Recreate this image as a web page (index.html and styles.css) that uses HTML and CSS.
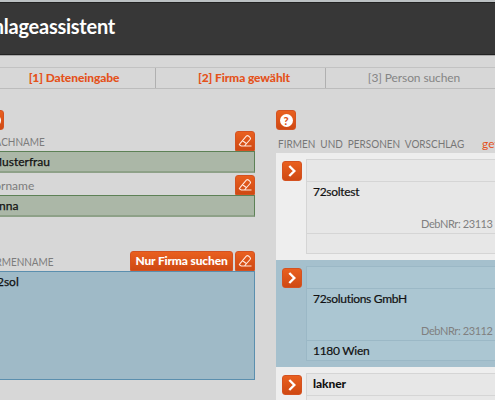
FILE: index.html
```html
<!DOCTYPE html>
<html lang="de">

<head>
    <meta charset="UTF-8">
    <meta name="viewport" content="width=device-width, initial-scale=1.0">
    <title>Anlageassistent</title>
    <link rel="stylesheet" href="styles.css">
</head>

<body>
    <svg class="defs" width="0" height="0">
        <symbol id="eraser" viewBox="0 0 20 20">
            <path d="M5 12.6 11.3 5.2Q12.3 4 13.5 5L15 6.3Q16.1 7.4 15.1 8.5L9.4 15H6.2L4.5 13.8Q4 13.2 5 12.6ZM7.6 9.7 11.6 12.8M6.2 15H16.5" />
        </symbol>
        <symbol id="arrow" viewBox="0 0 20 20">
            <path d="M7.3 5 12.3 10 7.3 15" />
        </symbol>
    </svg>

    <header class="header">
        <h1>Anlageassistent</h1>
    </header>

    <nav class="steps">
        <div class="step done">[1] Dateneingabe</div>
        <div class="step done">[2] Firma gewählt</div>
        <div class="step">[3] Person suchen</div>
    </nav>

    <main class="main">
        <section class="form">
            <div class="help"><span>?</span></div>
            <div class="label-row first">
                <label class="caps">NACHNAME</label>
                <button class="btn tab"><svg class="eraser"><use href="#eraser" /></svg></button>
            </div>
            <div class="field green">Musterfrau</div>
            <div class="label-row">
                <label>Vorname</label>
                <button class="btn tab"><svg class="eraser"><use href="#eraser" /></svg></button>
            </div>
            <div class="field green">Anna</div>
            <div class="label-row company">
                <label class="caps">FIRMENNAME</label>
                <button class="btn tab search">Nur Firma suchen</button>
                <button class="btn tab"><svg class="eraser"><use href="#eraser" /></svg></button>
            </div>
            <div class="field blue">72sol</div>
        </section>

        <section class="results">
            <div class="help"><span>?</span></div>
            <div class="results-title">
                <span class="caps">FIRMEN UND PERSONEN VORSCHLAG</span>
                <span class="found">gefunden</span>
            </div>
            <div class="item">
                <button class="btn go"><svg class="arrow"><use href="#arrow" /></svg></button>
                <div class="card">
                    <div class="top"></div>
                    <div class="middle">
                        <span class="name">72soltest</span>
                        <span class="number">DebNRr: 23113</span>
                    </div>
                    <div class="bottom"></div>
                </div>
            </div>
            <div class="item selected">
                <button class="btn go"><svg class="arrow"><use href="#arrow" /></svg></button>
                <div class="card">
                    <div class="top"></div>
                    <div class="middle">
                        <span class="name">72solutions GmbH</span>
                        <span class="number">DebNRr: 23112</span>
                    </div>
                    <div class="bottom">1180 Wien</div>
                </div>
            </div>
            <div class="item">
                <button class="btn go"><svg class="arrow"><use href="#arrow" /></svg></button>
                <div class="card">
                    <div class="top"><b>lakner</b></div>
                    <div class="middle"></div>
                    <div class="bottom"></div>
                </div>
            </div>
        </section>
    </main>
</body>

</html>
```

FILE: styles.css
```css
* {
    box-sizing: border-box;
}

body {
    margin: 0;
    width: 495px;
    height: 400px;
    overflow: hidden;
    background-color: #d7d7d7;
    color: #111;
    font-family: Lato, "Open Sans", sans-serif;
    font-size: 12px;
    line-height: 20px;
}

span,
label,
b {
    white-space: nowrap;
}

.defs {
    position: absolute;
}

.header {
    height: 56px;
    border-top: 2px solid #bcc1c3;
    border-bottom: 1px solid #aaa;
    background-color: #373737;
    box-shadow: inset 0 1px #222, inset 0 -1px #222;
    display: flex;
    justify-content: flex-end;
    padding-right: 380px;
}

h1 {
    margin: 0;
    color: #fff;
    font-size: 20px;
    font-weight: 700;
    line-height: 48px;
    letter-spacing: -0.25px;
    white-space: nowrap;
}

/* steps */
.steps {
    display: flex;
    width: 525px;
    height: 22px;
    margin: 11px 0 0 -14px;
    border-top: 1px solid #c2c2c2;
    border-bottom: 1px solid #bcbcbc;
}

.step {
    flex: 0 0 170px;
    border-right: 1px solid #b0b0b0;
    text-align: center;
    color: #858585;
    padding-left: 7px;
    letter-spacing: -0.1px;
}

.step.done {
    color: #e4521b;
    font-weight: 900;
}

.main {
    display: flex;
    margin: 21px 0 0 -16px;
}

.form {
    flex: none;
    width: 271px;
    margin-right: 21px;
}

.help,
.btn {
    width: 20px;
    height: 20px;
    border: 1px solid #d45221;
    border-radius: 3px;
    background: linear-gradient(#e9601f, #cf4913);
    color: #fff;
    padding: 0;
    flex: none;
}

.help {
    display: flex;
    align-items: center;
    justify-content: center;
}

.help span {
    width: 13px;
    height: 13px;
    border-radius: 50%;
    background-color: #fff;
    color: #dd5419;
    font-size: 11px;
    font-weight: 900;
    line-height: 13px;
    text-align: center;
}

/* condensed capitals */
.caps {
    transform: scaleX(0.83);
    transform-origin: left;
}

.label-row {
    display: flex;
    align-items: flex-end;
    height: 22px;
    gap: 2px;
    padding-left: 3px;
    color: #7c7c7c;
}

.label-row.first {
    height: 21px;
}

.label-row.company {
    height: 54px;
}

.label-row label {
    margin-right: auto;
    line-height: 18px;
}

.btn {
    font-family: inherit;
    display: flex;
    align-items: center;
    justify-content: center;
}

.tab {
    border-radius: 3px 3px 0 0;
}

.btn svg {
    width: 20px;
    height: 20px;
    flex: none;
    fill: none;
    stroke: #ffe9df;
    stroke-width: 1.1;
}

.btn .arrow {
    stroke: #fff;
    stroke-width: 2.4;
}

.search {
    width: 103px;
    font-size: 12px;
    font-weight: 900;
    line-height: 18px;
    letter-spacing: -0.15px;
}

.field {
    height: 22px;
    padding-left: 6px;
    border: 1px solid #5d8156;
    border-bottom: 2px solid #8ea188;
    background-color: #abb7a7;
    -webkit-text-stroke: 0.25px #111;
}

.field.blue {
    height: 109px;
    padding-left: 5px;
    border: 1px solid #5b8fae;
    background-color: #9fbac7;
}

/* results */
.results {
    flex: none;
    width: 260px;
}

.results-title {
    display: flex;
    height: 23px;
    padding-left: 2px;
    color: #777;
    line-height: 27px;
}

.results-title .caps {
    width: 204px;
    word-spacing: 3px;
}

.found {
    color: #e4521b;
}

.item {
    display: flex;
    gap: 4px;
    height: 107px;
    padding: 6px 0 6px 6px;
    background-color: #eee;
}

.go {
    margin-top: 2px;
}

.card {
    flex: 1;
    border: 1px solid #d5d5d5;
    background-color: #e7e7e7;
    letter-spacing: -0.3px;
}

.card > div {
    padding-left: 6px;
}

.top {
    height: 21px;
}

.top b {
    letter-spacing: -0.1px;
    font-weight: 900;
}

.middle {
    height: 53px;
    border-top: 1px solid #d5d5d5;
    border-bottom: 1px solid #d5d5d5;
    display: flex;
    flex-direction: column;
    justify-content: space-between;
}

.name,
.bottom {
    -webkit-text-stroke: 0.2px #111;
}

.number {
    color: #808080;
    font-size: 11px;
    line-height: 19px;
    letter-spacing: -0.4px;
    margin-left: 108px;
}

.selected {
    background-color: #a5c0cd;
}

.selected .card,
.selected .middle {
    border-color: #9bb8c6;
}

.selected .card {
    background-color: #abc6d2;
}
```
